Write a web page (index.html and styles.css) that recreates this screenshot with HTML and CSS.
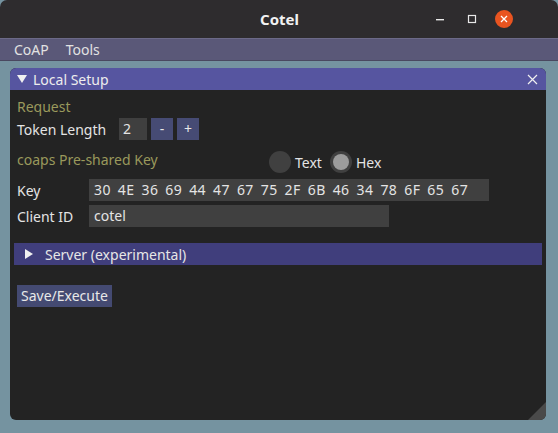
FILE: index.html
```html
<!DOCTYPE html>
<html>
<head>
<meta charset="utf-8">
<link rel="stylesheet" href="styles.css">
</head>
<body>
<div class="window">
  <header class="titlebar">
    <div></div>
    <div class="title">Cotel</div>
    <div class="controls">
      <span class="ctl min"><svg width="10" height="10" viewBox="0 0 10 10"><rect x="1" y="5" width="8" height="1.4" fill="#e8e8e8"/></svg></span>
      <span class="ctl max"><svg width="10" height="10" viewBox="0 0 10 10"><rect x="1.5" y="1.5" width="7" height="7" fill="none" stroke="#e8e8e8" stroke-width="1.2"/></svg></span>
      <span class="ctl close"><svg width="18" height="18" viewBox="0 0 18 18"><circle cx="9" cy="9" r="9" fill="#e95420"/><path d="M6 6 L12 12 M12 6 L6 12" stroke="#fff" stroke-width="1.3"/></svg></span>
    </div>
  </header>
  <nav class="menubar">
    <span class="menu">CoAP</span>
    <span class="menu">Tools</span>
  </nav>
  <main class="desk">
    <section class="panel">
      <div class="panel-head">
        <svg class="tri" width="12" height="10" viewBox="0 0 12 10"><path d="M1 1 H11 L6 9 Z" fill="#f0f0f0"/></svg>
        <span class="panel-title">Local Setup</span>
        <svg class="xclose" width="11" height="11" viewBox="0 0 11 11"><path d="M1 1 L10 10 M10 1 L1 10" stroke="#f0f0f0" stroke-width="1.2"/></svg>
      </div>
      <div class="panel-body">
        <div class="section-label row-req">Request</div>
        <div class="row token">
          <span class="label">Token Length</span>
          <span class="num">2</span>
          <span class="btn sq">-</span>
          <span class="btn sq">+</span>
        </div>
        <div class="row psk">
          <span class="section-label psk-label">coaps Pre-shared Key</span>
          <span class="radio"><span class="dot"></span>Text</span>
          <span class="radio on"><span class="dot"></span>Hex</span>
        </div>
        <div class="row field">
          <span class="label fl">Key</span>
          <span class="input key">30 4E 36 69 44 47 67 75 2F 6B 46 34 78 6F 65 67</span>
        </div>
        <div class="row field">
          <span class="label fl">Client ID</span>
          <span class="input cid">cotel</span>
        </div>
        <div class="collapse">
          <svg width="10" height="12" viewBox="0 0 10 12"><path d="M1 1 L9 6 L1 11 Z" fill="#f0f0f0"/></svg>
          <span>Server (experimental)</span>
        </div>
        <div class="actions"><span class="btn save">Save/Execute</span></div>
      </div>
      <svg class="grip" width="18" height="18" viewBox="0 0 18 18"><path d="M18 0 L18 13 Q18 18 13 18 L0 18 Z" fill="#4a4a4a"/></svg>
    </section>
  </main>
</div>
</body>
</html>
```
FILE: styles.css
```css
* { box-sizing: border-box; }
html, body { margin: 0; padding: 0; }
body {
  width: 558px;
  height: 433px;
  overflow: hidden;
  background: #7593a0;
  font-family: "Noto Sans", "DejaVu Sans", sans-serif;
  font-size: 14px;
  color: #e4e4e4;
}
.window { height: 433px; display: flex; flex-direction: column; }
.titlebar {
  height: 38px;
  background: #2e2c2e;
  border-radius: 7px 7px 0 0;
  display: grid;
  grid-template-columns: 1fr auto 1fr;
  align-items: center;
}
.title { font-weight: bold; font-size: 15px; color: #f2f2f2; padding-left: 1px; }
.controls { display: flex; justify-content: flex-end; align-items: center; padding-right: 45px; }
.ctl { display: flex; align-items: center; justify-content: center; }
.ctl.min { width: 10px; margin-right: 22px; }
.ctl.max { width: 10px; margin-right: 18px; }
.ctl.close { width: 18px; }
.menubar {
  height: 23px;
  background: #5a5878;
  border-top: 1px solid #6c6a88;
  border-bottom: 1px solid #4a4860;
  display: flex;
  align-items: center;
  padding-left: 14px;
  gap: 17px;
  color: #e2e2e2;
}
.desk { flex: 1; padding: 7px 12px 13px 10px; }
.panel {
  position: relative;
  height: 352px;
  background: #232323;
  border-radius: 6px;
  overflow: hidden;
}
.panel-head {
  height: 22px;
  background: #5655a0;
  display: flex;
  align-items: center;
  padding: 0 8px 0 6px;
}
.panel-head .tri { margin-right: 5px; }
.panel-title { flex: 1; color: #ededed; }
.panel-body { padding: 6px 7px 0 7px; }
.section-label { color: #9a995c; }
.row-req { height: 22px; line-height: 22px; }
.row { display: flex; align-items: center; height: 22px; }
.token .label { width: 102px; }
.num {
  width: 28px; height: 22px; line-height: 22px;
  background: #3f3f3f; padding-left: 4px; margin-right: 4px;
}
.btn { background: #464b74; color: #e8e8e8; height: 22px; line-height: 22px; }
.btn.sq { width: 22px; text-align: center; margin-right: 4px; }
.psk { margin-top: 11px; }
.psk-label { width: 252px; margin-top: -5px; }
.radio { display: flex; align-items: center; margin-right: 8px; }
.dot {
  width: 22px; height: 22px; border-radius: 50%;
  background: #404040; margin-right: 4px; position: relative;
}
.radio.on .dot::after {
  content: ""; position: absolute; left: 3px; top: 3px;
  width: 16px; height: 16px; border-radius: 50%; background: #9c9c9c;
}
.field { margin-top: 4px; }
.psk + .field { margin-top: 6px; }
.fl { width: 72px; }
.input { height: 22px; line-height: 22px; background: #404040; padding-left: 5px; white-space: pre; }
.key { width: 400px; word-spacing: 3px; letter-spacing: 0.4px; }
.cid { width: 300px; }
.collapse {
  margin: 16px -3px 0 -3px;
  height: 22px;
  background: #403e7c;
  display: flex;
  align-items: center;
  padding-left: 10px;
  gap: 11px;
  color: #e6e6e6;
}
.actions { margin-top: 20px; display: flex; }
.btn.save { padding: 0 4px; background: #444a72; }
.grip { position: absolute; right: 0; bottom: 0; }
```
